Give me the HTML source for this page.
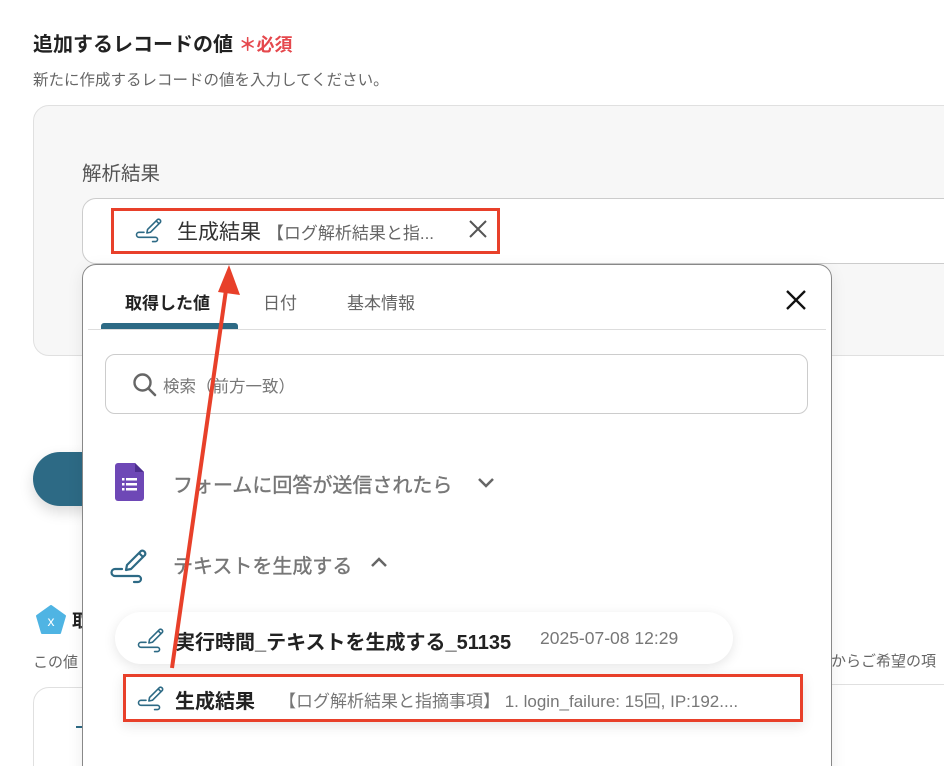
<!DOCTYPE html>
<html><head><meta charset="utf-8"><style>
*{box-sizing:border-box;margin:0;padding:0}
html,body{width:944px;height:766px;overflow:hidden}
body{background:#fff;font-family:"Liberation Sans","Noto Sans CJK JP",sans-serif;position:relative}
.a{position:absolute;white-space:nowrap}
</style></head><body>
<svg width="0" height="0" style="position:absolute"><defs>
<g id="pen" fill="none" stroke="#2d6a85" stroke-width="2.2" stroke-linecap="round" stroke-linejoin="round">
<path d="M19 24 L33 10 a3 3 0 0 1 4 4 L23 28 L18 29 Z M31 12 L35 16"/>
<path d="M14 28 H7 a3.5 3.5 0 0 0 0 7 H30 a3 3 0 0 1 0 6 H26"/>
</g></defs></svg>

<div class="a" style="left:33px;top:28px;font-size:20px;font-weight:bold;color:#222">追加するレコードの値 <span style="color:#e5484d;font-size:18px">＊必須</span></div>
<div class="a" style="left:33px;top:68px;font-size:15.5px;color:#666">新たに作成するレコードの値を入力してください。</div>

<div class="a" style="left:33px;top:105px;width:940px;height:251px;background:#f7f7f7;border:1px solid #e0e0e0;border-radius:16px"></div>
<div class="a" style="left:82px;top:157px;font-size:19.5px;color:#555">解析結果</div>
<div class="a" style="left:82px;top:198px;width:900px;height:66px;background:#fff;border:1px solid #ccc;border-radius:14px"></div>

<div class="a" style="left:111px;top:208px;width:389px;height:46px;background:#fff;border:3px solid #e8402a"></div>
<svg class="a" style="left:134px;top:210px" width="30" height="36" viewBox="0 0 42 44"><use href="#pen"/></svg>
<div class="a" style="left:177px;top:216px;font-size:21px;color:#333">生成結果 <span style="font-size:17px;color:#666">【ログ解析結果と指...</span></div>
<svg class="a" style="left:468px;top:219px" width="20" height="20" viewBox="0 0 20 20"><path d="M2 2L18 18M18 2L2 18" stroke="#555" stroke-width="2"/></svg>

<div class="a" style="left:33px;top:452px;width:80px;height:54px;background:#2d6a85;border-radius:27px;box-shadow:0 6px 14px rgba(0,0,0,.15)"></div>
<svg class="a" style="left:35px;top:604px" width="32" height="32" viewBox="0 0 32 32"><path d="M16 2 L30 12 L25 29 L7 29 L2 12 Z" fill="#4fb4e3" stroke="#4fb4e3" stroke-width="2" stroke-linejoin="round"/><text x="16" y="22" font-size="14" fill="#fff" text-anchor="middle" font-family="Liberation Sans">x</text></svg>
<div class="a" style="left:72px;top:607px;font-size:18px;font-weight:bold;color:#222">取</div>
<div class="a" style="left:33px;top:651px;font-size:15px;color:#666">この値</div>
<div class="a" style="left:831px;top:650px;font-size:15px;color:#666">からご希望の項</div>
<div class="a" style="left:831px;top:684px;width:120px;height:1px;background:#e0e0e0"></div>
<div class="a" style="left:33px;top:687px;width:120px;height:100px;border:1px solid #e0e0e0;border-radius:16px"></div>
<div class="a" style="left:76px;top:726px;width:8px;height:2px;background:#2d6a85"></div>

<div class="a" style="left:82px;top:264px;width:750px;height:520px;background:#fff;border:1px solid #888;border-radius:14px;box-shadow:0 4px 16px rgba(0,0,0,.08)"></div>
<div class="a" style="left:125px;top:289px;font-size:17px;font-weight:bold;color:#222">取得した値</div>
<div class="a" style="left:263px;top:289px;font-size:17px;color:#666">日付</div>
<div class="a" style="left:347px;top:289px;font-size:17px;color:#666">基本情報</div>
<div class="a" style="left:101px;top:323px;width:137px;height:6px;background:#2d6a85;border-radius:3px 3px 0 0"></div>
<div class="a" style="left:88px;top:329px;width:738px;height:1px;background:#ddd"></div>
<svg class="a" style="left:784px;top:288px" width="24" height="24" viewBox="0 0 24 24"><path d="M3 3L21 21M21 3L3 21" stroke="#111" stroke-width="2.3"/></svg>

<div class="a" style="left:105px;top:354px;width:703px;height:60px;border:1px solid #ccc;border-radius:10px"></div>
<svg class="a" style="left:132px;top:372px" width="26" height="26" viewBox="0 0 26 26"><circle cx="10.5" cy="10.5" r="8" fill="none" stroke="#666" stroke-width="2.4"/><path d="M16.5 16.5L23 23" stroke="#666" stroke-width="2.6" stroke-linecap="round"/></svg>
<div class="a" style="left:163px;top:373px;font-size:16.5px;color:#777">検索（前方一致）</div>

<svg class="a" style="left:115px;top:463px" width="29" height="38" viewBox="0 0 29 38"><path d="M3 0 H20 L29 9 V35 a3 3 0 0 1 -3 3 H3 a3 3 0 0 1 -3 -3 V3 a3 3 0 0 1 3 -3Z" fill="#6e48b6"/><path d="M20 0 L29 9 H20Z" fill="#4d2f8f"/><g fill="#fff"><rect x="7" y="15" width="2.5" height="2.5"/><rect x="11" y="15" width="11" height="2.5"/><rect x="7" y="20" width="2.5" height="2.5"/><rect x="11" y="20" width="11" height="2.5"/><rect x="7" y="25" width="2.5" height="2.5"/><rect x="11" y="25" width="11" height="2.5"/></g></svg>
<div class="a" style="left:173px;top:469px;font-size:20px;color:#777;-webkit-text-stroke:0.4px #777">フォームに回答が送信されたら</div>
<svg class="a" style="left:477px;top:476px" width="18" height="12" viewBox="0 0 18 12"><path d="M2 3L9 10L16 3" fill="none" stroke="#666" stroke-width="2.5"/></svg>

<svg class="a" style="left:108px;top:541px" width="42" height="44" viewBox="0 0 42 44"><use href="#pen"/></svg>
<div class="a" style="left:173px;top:550px;font-size:20px;color:#777;-webkit-text-stroke:0.4px #777">テキストを生成する</div>
<svg class="a" style="left:370px;top:556px" width="18" height="12" viewBox="0 0 18 12"><path d="M2 10L9 3L16 10" fill="none" stroke="#666" stroke-width="2.5"/></svg>

<div class="a" style="left:115px;top:612px;width:618px;height:52px;background:#fff;border-radius:26px;box-shadow:0 3px 12px rgba(0,0,0,.1)"></div>
<svg class="a" style="left:136px;top:622px" width="30" height="32" viewBox="0 0 42 44"><use href="#pen"/></svg>
<div class="a" style="left:175px;top:626px;font-size:20px;font-weight:bold;color:#222">実行時間_テキストを生成する_51135</div>
<div class="a" style="left:540px;top:628px;font-size:17.5px;color:#777">2025-07-08 12:29</div>

<div class="a" style="left:123px;top:674px;width:680px;height:48px;background:#fff;border:3px solid #e8402a;box-shadow:0 4px 12px rgba(0,0,0,.1)"></div>
<svg class="a" style="left:136px;top:680px" width="30" height="32" viewBox="0 0 42 44"><use href="#pen"/></svg>
<div class="a" style="left:175px;top:685px;font-size:20px;font-weight:bold;color:#222">生成結果</div>
<div class="a" style="left:279px;top:687px;font-size:17px;color:#777">【ログ解析結果と指摘事項】 1. login_failure: 15回, IP:192....</div>

<svg class="a" style="left:0;top:0" width="944" height="766"><line x1="172" y1="668" x2="226" y2="290" stroke="#e8402a" stroke-width="4"/><path d="M229 265 L240 295 L218 292Z" fill="#e8402a"/></svg>
</body></html>
